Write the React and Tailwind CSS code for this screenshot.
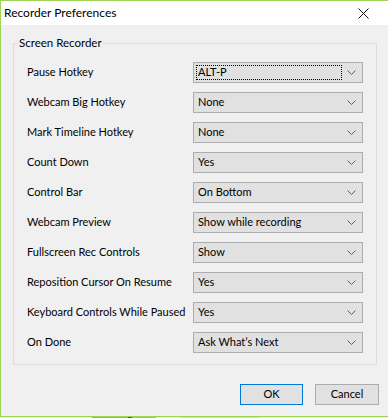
import { useState } from 'react';

// rows of the Screen Recorder group
const rows = [
    { label: 'Pause Hotkey', value: 'ALT-P', focused: true },
    { label: 'Webcam Big Hotkey', value: 'None' },
    { label: 'Mark Timeline Hotkey', value: 'None' },
    { label: 'Count Down', value: 'Yes' },
    { label: 'Control Bar', value: 'On Bottom' },
    { label: 'Webcam Preview', value: 'Show while recording' },
    { label: 'Fullscreen Rec Controls', value: 'Show' },
    { label: 'Reposition Cursor On Resume', value: 'Yes' },
    { label: 'Keyboard Controls While Paused', value: 'Yes' },
    { label: 'On Done', value: 'Ask What\u2019s Next' }
];

function Chevron() {
    return (
        <svg width="9" height="5" viewBox="0 0 9 5" className="shrink-0">
            <path d="M0.5 0.5 L4.5 4.5 L8.5 0.5" fill="none" stroke="#606060" strokeWidth="1" />
        </svg>
    );
}

function Combo({ value, focused }) {
    return (
        <div className="w-[170px] h-[21px] flex items-center border border-[#adadad] bg-[#e1e1e1] pl-[2px] pr-[6px]">
            <div
                className={
                    'flex-1 h-[15px] flex items-center pl-[1px] ' +
                    (focused ? 'border border-dotted border-black' : 'border border-transparent')
                }
            >
                {value}
            </div>
            <div className="w-[14px] flex justify-end">
                <Chevron />
            </div>
        </div>
    );
}

export default function App() {
    const [values] = useState(rows);

    return (
        <div
            className="w-[388px] h-[418px] flex flex-col overflow-hidden bg-[#e6e6e2] text-[11px] text-black"
            style={{ fontFamily: 'Lato, "Noto Sans", sans-serif' }}
        >
            <div className="h-[417px] flex flex-col border-l border-t border-b border-[#9ed35b] bg-[#f0f0f0]">
                {/* title bar */}
                <div className="h-[24px] shrink-0 flex items-center justify-between bg-white pl-[3px]">
                    <span className="leading-none text-[12px]">Recorder Preferences</span>
                    <div className="w-[46px] h-[24px] flex items-center justify-center pr-[4px]">
                        <svg width="11" height="11" viewBox="0 0 11 11">
                            <path d="M0.5 0.5 L10.5 10.5 M10.5 0.5 L0.5 10.5" stroke="#111" strokeWidth="1" />
                        </svg>
                    </div>
                </div>

                {/* group box */}
                <div className="pl-[12px] pt-[18px] w-[376px]">
                    <div className="relative border border-[#dcdcdc] h-[322px] pl-[13px] pt-[18px] pr-[12px]">
                        <span className="absolute -top-[9px] left-[4px] px-[1px] bg-[#f0f0f0] leading-[16px] text-[11.5px]">
                            Screen Recorder
                        </span>
                        <div className="flex flex-col gap-[9px]">
                            {values.map((r) => (
                                <div key={r.label} className="flex items-center">
                                    <span className="w-[166px] shrink-0 whitespace-nowrap leading-[16px] -mt-[1px]">
                                        {r.label}
                                    </span>
                                    <Combo value={r.value} focused={r.focused} />
                                </div>
                            ))}
                        </div>
                    </div>
                </div>

                {/* buttons */}
                <div className="flex justify-end gap-[12px] pr-[9px] pt-[19px]">
                    <button className="w-[63px] h-[21px] border border-[#0078d7] bg-[#e1e1e1] flex items-center justify-center">
                        OK
                    </button>
                    <button className="w-[64px] h-[21px] border border-[#adadad] bg-[#e1e1e1] flex items-center justify-center">
                        Cancel
                    </button>
                </div>
            </div>
            {/* strip of desktop under the window */}
            <div className="h-[1px] flex">
                <div className="w-[92px] bg-[#ecece6]" />
                <div className="w-[36px] bg-[#c9a24a]" />
                <div className="w-[4px] bg-[#3a5a40]" />
                <div className="w-[24px] bg-[#d9b24e]" />
                <div className="w-[24px] bg-[#ecece6]" />
                <div className="w-[80px] bg-[#e2d9a8]" />
                <div className="flex-1 bg-[#ecece6]" />
            </div>
        </div>
    );
}
